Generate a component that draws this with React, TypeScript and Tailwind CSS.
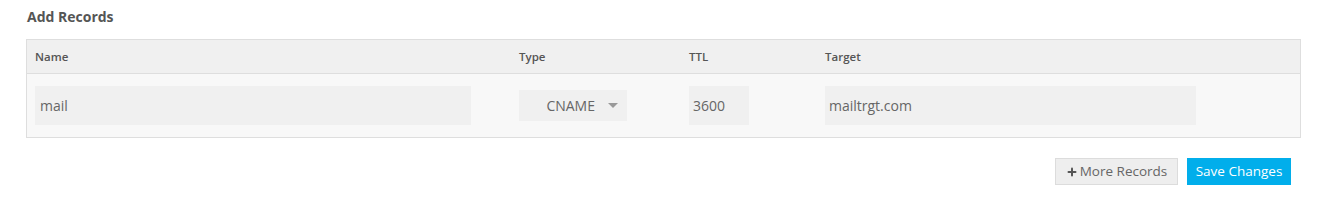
import { Plus } from "lucide-react";

export default function App() {
  return (
    <div className="h-[201px] w-[1328px] bg-white font-['Open_Sans',sans-serif] text-[#555]">
      <div className="pl-[26px] pr-[27px] pt-[5px]">
        <h2 className="mb-[11px] h-[23px] pl-px text-[14px] font-bold leading-[23px] text-[#555]">Add Records</h2>

        <div className="border border-[#dedede]">
          <div className="flex h-[34px] items-center border-b border-[#dedede] bg-[#f0f0f0] pl-[8px] text-[11.5px] font-semibold text-[#555]">
            <div className="w-[484px]">Name</div>
            <div className="w-[170px]">Type</div>
            <div className="w-[136px]">TTL</div>
            <div>Target</div>
          </div>
          <div className="flex h-[63px] items-center bg-[#f8f8f8] pl-[8px] text-[14px] text-[#666]">
            <div className="w-[484px]">
              <div className="flex h-[39px] w-[436px] items-center bg-[#f0f0f0] px-[5px]">mail</div>
            </div>
            <div className="w-[170px]">
              <div className="flex h-[31px] w-[108px] items-center justify-end bg-[#f0f0f0] pr-[9px]">
                <span className="mr-[13px]">CNAME</span>
                <span className="h-0 w-0 border-x-[5px] border-t-[5px] border-x-transparent border-t-[#999]" />
              </div>
            </div>
            <div className="w-[136px]">
              <div className="flex h-[39px] w-[60px] items-center bg-[#f0f0f0] px-[4px]">3600</div>
            </div>
            <div>
              <div className="flex h-[39px] w-[371px] items-center bg-[#f0f0f0] px-[4px]">mailtrgt.com</div>
            </div>
          </div>
        </div>

        <div className="mt-[20px] flex justify-end gap-[9px] pr-[10px]">
          <button className="flex h-[27px] w-[123px] items-center justify-center gap-[2px] border border-[#dcdcdc] bg-[#eeeeee] text-[13.5px] text-[#666]">
            <Plus size={12} strokeWidth={4} className="text-[#555]" />
            More Records
          </button>
          <button className="flex h-[27px] w-[104px] items-center justify-center bg-[#01aeeb] text-[13.5px] text-white">
            Save Changes
          </button>
        </div>
      </div>
    </div>
  );
}
